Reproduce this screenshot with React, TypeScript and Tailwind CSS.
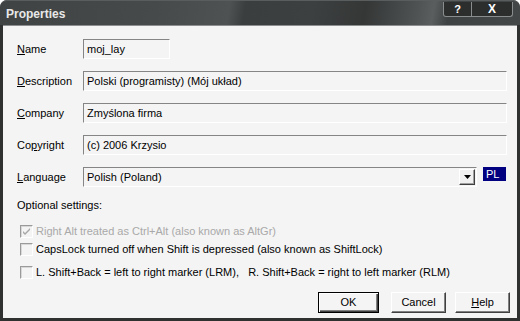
import React from "react";

const font = { fontFamily: '"Liberation Sans", Arial, sans-serif' };

function Field({ text, w }: { text: string; w: string }) {
  return (
    <div
      className={`${w} h-[20px] flex items-center pl-[3px] border border-t-[#858585] border-l-[#858585] border-b-white border-r-white bg-[#f4f4f4] text-[11px] text-black whitespace-nowrap`}
    >
      {text}
    </div>
  );
}

function Label({ children }: { children: React.ReactNode }) {
  return <div className="w-[66px] text-[11px] text-black leading-[13px]">{children}</div>;
}

function Check({ checked, disabled, children }: { checked?: boolean; disabled?: boolean; children: React.ReactNode }) {
  return (
    <div className="flex items-center h-[13px]">
      <div className="ml-[3px] w-[13px] h-[13px] border border-t-[#9a9a9a] border-l-[#9a9a9a] border-b-white border-r-white bg-[#f4f4f4] flex items-center justify-center shadow-[inset_1px_1px_0_#d8d8d8]">
        {checked && (
          <svg width="9" height="9" viewBox="0 0 9 9">
            <path d="M1 4 L3 6 L8 1 L8 3 L3 8 L1 6 Z" fill={disabled ? "#a8a8a8" : "#000"} />
          </svg>
        )}
      </div>
      <div className={`ml-[3px] text-[11px] leading-[13px] whitespace-pre ${disabled ? "text-[#a9a9a9]" : "text-black"}`}>
        {children}
      </div>
    </div>
  );
}

function Btn({ children, w, def }: { children: React.ReactNode; w: string; def?: boolean }) {
  return (
    <div
      className={`${w} h-[21px] flex items-center justify-center text-[11px] text-black bg-[#f4f4f4] ${
        def
          ? "border border-black shadow-[inset_1px_1px_0_#fff,inset_-1px_-1px_0_#404040,inset_-2px_-2px_0_#808080]"
          : "border border-t-white border-l-white border-b-[#404040] border-r-[#404040] shadow-[inset_-1px_-1px_0_#808080]"
      }`}
    >
      {children}
    </div>
  );
}

export default function App() {
  return (
    <div style={font} className="w-[520px] h-[321px] bg-[#2f3131] rounded-t-[7px] flex flex-col overflow-hidden">
      <div className="h-[25px] flex items-start justify-between rounded-t-[7px] bg-[linear-gradient(100deg,#404343_0%,#474a4a_30%,#4e5252_44%,#3b3e3e_47%,#3d4040_60%,#353737_70%,#4f5353_80%,#5a5e5e_83%,#3f4242_86%,#444747_100%)] border-t border-[#5a5d5d]">
        <div className="ml-[6px] mt-[6px] text-[12px] font-bold text-[#e8e8e8] leading-[14px]">Properties</div>
        <div className="flex mt-[1px] mr-[7px]">
          <div className="w-[29px] h-[15px] flex items-center justify-center bg-[#2c2e2e] border border-[#8a8d8d] border-t-0 rounded-bl-[3px] text-white font-bold text-[11px] leading-none">
            ?
          </div>
          <div className="w-[41px] h-[15px] flex items-center justify-center bg-[#2c2e2e] border border-l-0 border-[#8a8d8d] border-t-0 rounded-br-[3px] text-white font-bold text-[12px] leading-none">
            X
          </div>
        </div>
      </div>
      <div className="h-[1px] bg-[#8c8f8f] mx-[3px]" />
      <div className="flex-1 ml-[3px] mr-[3px] mb-[3px] bg-[#f4f4f4] pt-[13px] pl-[14px] flex flex-col">
        <div className="flex items-center">
          <Label>
            <u className="underline-offset-1">N</u>ame
          </Label>
          <Field text="moj_lay" w="w-[87px]" />
        </div>
        <div className="flex items-center mt-[12px]">
          <Label>
            <u>D</u>escription
          </Label>
          <Field text="Polski (programisty) (Mój układ)" w="w-[424px]" />
        </div>
        <div className="flex items-center mt-[12px]">
          <Label>
            <u>C</u>ompany
          </Label>
          <Field text="Zmyślona firma" w="w-[424px]" />
        </div>
        <div className="flex items-center mt-[12px]">
          <Label>
            Co<u>p</u>yright
          </Label>
          <Field text="(c) 2006 Krzysio" w="w-[424px]" />
        </div>
        <div className="flex items-center mt-[12px]">
          <Label>
            <u>L</u>anguage
          </Label>
          <div className="w-[394px] h-[20px] flex items-center justify-between pl-[3px] pr-[1px] border border-t-[#858585] border-l-[#858585] border-b-white border-r-white bg-[#f4f4f4] text-[11px] text-black">
            <span>Polish (Poland)</span>
            <div className="w-[16px] h-[16px] bg-[#f0f0f0] border border-t-white border-l-white border-b-[#404040] border-r-[#404040] shadow-[inset_-1px_-1px_0_#a0a0a0] flex items-center justify-center">
              <svg width="7" height="4" viewBox="0 0 7 4">
                <path d="M0 0 H7 L3.5 4 Z" fill="#000" />
              </svg>
            </div>
          </div>
          <div className="self-start ml-[6px] w-[23px] h-[14px] bg-[#000080] text-white text-[11px] leading-[14px] pl-[3px]">PL</div>
        </div>
        <div className="mt-[12px] text-[11px] leading-[13px] text-black">Optional settings:</div>
        <div className="mt-[13px]">
          <Check checked disabled>
            Right Alt treated as Ctrl+Alt (also known as AltGr)
          </Check>
        </div>
        <div className="mt-[5px]">
          <Check>CapsLock turned off when Shift is depressed (also known as ShiftLock)</Check>
        </div>
        <div className="mt-[10px]">
          <Check>{"L. Shift+Back = left to right marker (LRM),   R. Shift+Back = right to left marker (RLM)"}</Check>
        </div>
        <div className="mt-[13px] flex justify-end pr-[7px]">
          <Btn w="w-[61px]" def>
            OK
          </Btn>
          <div className="w-[12px]" />
          <Btn w="w-[55px]">Cancel</Btn>
          <div className="w-[9px]" />
          <Btn w="w-[55px]">
            <u>H</u>elp
          </Btn>
        </div>
      </div>
    </div>
  );
}
